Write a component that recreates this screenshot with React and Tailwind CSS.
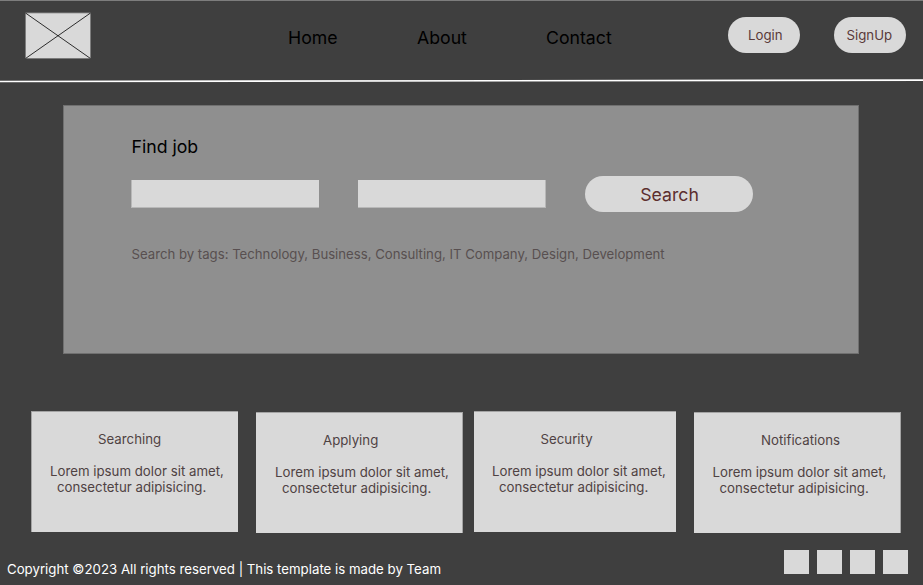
const cards = [
  { title: 'Searching', box: 'w-[207px] border-t border-l', titlePad: 'pl-[66px]', textPad: 'pl-[18px]' },
  { title: 'Applying', box: 'w-[207px] ml-[18px] mt-px border-t border-r', titlePad: 'pl-[67px]', textPad: 'pl-[19px]' },
  { title: 'Security', box: 'w-[202px] ml-[11px] border-t', titlePad: 'pl-[66.5px]', textPad: 'pl-[18px]' },
  { title: 'Notifications', box: 'w-[207px] ml-[18px] mt-px border-t border-r', titlePad: 'pl-[67px]', textPad: 'pl-[18.5px]' },
];

function Logo() {
  return (
    <svg className="ml-[25px] mt-[11px] shrink-0" width="66" height="48" viewBox="0 0 66 48">
      <rect x="0.4" y="0.9" width="65.2" height="45.6" fill="#d9d9d9" stroke="#777" strokeWidth="0.8" />
      <path d="M0.5 1L65.5 46.5M65.5 1L0.5 46.5" stroke="#000" strokeWidth="0.8" />
    </svg>
  );
}

function Header() {
  return (
    <header className="h-[78px] flex items-start text-black whitespace-nowrap">
      <Logo />
      <nav className="flex ml-[197px] mt-[26px] text-[17.7px] leading-[22px]">
        <a className="w-[129px]">Home</a>
        <a className="w-[129px]">About</a>
        <a className="w-[182px]">Contact</a>
      </nav>
      <div className="flex gap-[34px] mt-4 text-[13.25px] leading-4 text-[#5a3a3a]">
        <button className="w-[72px] h-9 rounded-full bg-[#d9d9d9] pl-5 pb-px text-left">Login</button>
        <button className="w-[72px] h-9 rounded-full bg-[#d9d9d9] pl-[12.5px] pb-px text-left">SignUp</button>
      </div>
    </header>
  );
}

function SearchPanel() {
  return (
    <section className="ml-[63px] mt-[22px] w-[796px] h-[249px] bg-[#8f8f8f] border border-[#707070] pl-[67px] pt-[30px] whitespace-nowrap">
      <h1 className="pl-[0.5px] text-[17.7px] leading-[22px] text-black">Find job</h1>
      <div className="flex mt-[18px] h-9">
        <input className="w-[188px] h-7 mt-1 bg-[#d9d9d9] border-l border-b border-[#b8b8b8]" />
        <input className="w-[188px] h-7 mt-1 ml-[39px] bg-[#d9d9d9] border-b border-r border-[#b8b8b8]" />
        <button className="w-[168px] h-[35.5px] ml-[39px] pt-[3px] pl-px rounded-full bg-[#d9d9d9] text-[17.7px] leading-[22px] text-[#5c2e2e]">Search</button>
      </div>
      <p className="mt-[34px] pl-[0.5px] text-[13.18px] leading-4 text-[#584f50]">
        Search by tags: Technology, Business, Consulting, IT Company, Design, Development
      </p>
    </section>
  );
}

function Card({ title, box, titlePad, textPad }) {
  return (
    <article className={`h-[121px] pt-[19px] shrink-0 bg-[#d9d9d9] border-[#a4a4a4] text-[#4f4243] text-[13.25px] leading-4 whitespace-nowrap ${box}`}>
      <h2 className={titlePad}>{title}</h2>
      <p className={`mt-4 ${textPad}`}>
        Lorem ipsum dolor sit amet,
        <span className="block pl-[7px]">consectetur adipisicing.</span>
      </p>
    </article>
  );
}

export default function App() {
  return (
    <div className="w-[923px] h-[585px] overflow-hidden flex flex-col bg-[#3f3f3f] border-t border-[#7d7d7d] font-[Inter,sans-serif] antialiased">
      <Header />
      <svg className="shrink-0" width="923" height="4" viewBox="0 0 923 4">
        <path d="M0 2.5L923 1.1" stroke="#fff" strokeWidth="1.6" />
      </svg>
      <SearchPanel />
      <main className="flex items-start ml-[31px] mt-[57px] h-[122px]">
        {cards.map((card) => <Card key={card.title} {...card} />)}
      </main>
      <footer className="flex items-start mt-[17px] pl-[7px] pr-[15px] justify-between text-white text-[13.25px] leading-4 whitespace-nowrap">
        <p className="mt-[11px]">Copyright ©2023 All rights reserved | This template is made by Team</p>
        <div className="flex gap-2">
          {[0, 1, 2, 3].map((n) => <span key={n} className="w-[25px] h-6 bg-[#d9d9d9]" />)}
        </div>
      </footer>
    </div>
  );
}
